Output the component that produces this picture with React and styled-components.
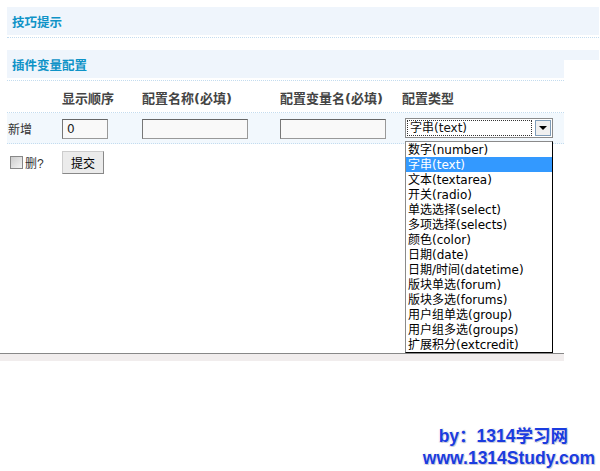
import React from "react";
import styled, { createGlobalStyle } from "styled-components";

const Global = createGlobalStyle`
  html, body { margin: 0; padding: 0; background: #fff; }
  body { font: 12px "Liberation Sans", "Noto Sans CJK SC", sans-serif; color: #333; }
`;

const Page = styled.div`
  position: relative;
  width: 600px;
  height: 471px;
  overflow: hidden;
  padding-top: 7px;
  box-sizing: border-box;
`;

const Section = styled.div`
  margin-left: 7px;
  width: ${p => p.$w}px;
  margin-bottom: ${p => p.$mb || 0}px;
`;

const Header = styled.div`
  position: relative;
  height: 28px;
  background: #eff5fc;
  display: flex;
  align-items: center;
  padding-left: 5px;
  font-weight: bold;
  font-size: 12.5px;
  color: #0e93c7;
  border-bottom: 2px solid #fff;
  &::after {
    content: "";
    display: ${p => (p.$ext ? "block" : "none")};
    position: absolute;
    left: 100%;
    top: 0;
    width: 35px;
    height: 10px;
    background: #eff5fc;
  }
`;

const Dotted = styled.div`
  border-top: 1px dotted #c3dcef;
`;

const Grid = styled.div`
  display: grid;
  grid-template-columns: 55px 80px 138px 122px 1fr;
  align-items: center;
`;

const HeadRow = styled(Grid)`
  height: 30px;
  font: bold 13px "DejaVu Sans", "Noto Sans CJK SC", sans-serif;
  color: #444;
  border-bottom: 1px dotted #c3dcef;
  padding-top: 1px;
`;

const DataRow = styled(Grid)`
  height: 30px;
  background: #f2f8fd;
  border-bottom: 1px dotted #c3dcef;
`;

const Label = styled.span`
  color: #333;
  padding-left: 1px;
`;

const TextInput = styled.input`
  box-sizing: border-box;
  height: 20px;
  width: ${p => p.$w}px;
  border: 1px solid #999;
  border-top-color: #666;
  border-left-color: #777;
  background: #f9f9f9;
  font: 12px "DejaVu Sans", sans-serif;
  color: #222;
  padding: 0 4px;
  margin-top: 1px;
  outline: none;
`;

const SelectWrap = styled.div`
  position: relative;
  margin-left: 3px;
  width: 148px;
`;

const SelectBox = styled.div`
  box-sizing: border-box;
  height: 20px;
  border: 1px solid #8a8a8a;
  background: #fff;
  display: flex;
  align-items: center;
  padding: 1px;
`;

const SelText = styled.div`
  flex: 1;
  height: 16px;
  border: 1px dotted #333;
  box-sizing: border-box;
  font: 12px "DejaVu Sans", "Noto Sans CJK SC", sans-serif;
  color: #111;
  line-height: 14px;
  padding-left: 2px;
  margin-right: 3px;
`;

const ArrowBtn = styled.div`
  width: 16px;
  height: 16px;
  box-sizing: border-box;
  border: 1px solid #7f9db9;
  background: #f0f0f0;
  display: flex;
  align-items: center;
  justify-content: center;
`;

const List = styled.ul`
  position: absolute;
  top: 23px;
  left: 0;
  width: 148px;
  margin: 0;
  padding: 0;
  list-style: none;
  box-sizing: border-box;
  border: 1px solid #000;
  border-left-color: #8a8a8a;
  border-top-color: #8a8a8a;
  background: #fff;
  z-index: 2;
`;

const Item = styled.li`
  height: 15px;
  padding: 1px 0 0 2px;
  box-sizing: border-box;
  font: 12px "DejaVu Sans", "Noto Sans CJK SC", sans-serif;
  line-height: 14px;
  color: ${p => (p.$sel ? "#fff" : "#000")};
  background: ${p => (p.$sel ? "#3399ff" : "transparent")};
  white-space: nowrap;
`;

const ActionRow = styled.div`
  display: flex;
  align-items: center;
  height: 32px;
  padding-top: 4px;
  box-sizing: border-box;
`;

const CheckLabel = styled.label`
  display: flex;
  align-items: center;
  width: 55px;
  color: #333;
  padding-left: 3px;
  box-sizing: border-box;
`;

const Check = styled.span`
  width: 11px;
  height: 11px;
  border: 1px solid #888;
  background: linear-gradient(135deg, #ccc, #f4f4f4);
  margin-right: 2px;
`;

const Button = styled.button`
  height: 23px;
  width: 42px;
  border: 1px solid #888;
  border-top-color: #ccc;
  border-left-color: #ccc;
  background: #ebebeb;
  font: 12px "Liberation Sans", "Noto Sans CJK SC", sans-serif;
  color: #000;
  padding: 0;
`;

const Footer = styled.div`
  position: absolute;
  left: 0;
  top: 353px;
  width: 564px;
  border-top: 1px solid #888;
  height: 7px;
  background: #f1eded;
`;

const Watermark = styled.div`
  position: absolute;
  right: 5px;
  bottom: 2px;
  text-align: right;
  font: bold 17.5px "Liberation Sans", "Noto Sans CJK SC", sans-serif;
  color: #1a3ce0;
  line-height: 22px;
  text-shadow: 1px 1px 0 #ccd, -1px -1px 0 #fff, 1px -1px 0 #eee, -1px 1px 0 #eee;
`;

const WLine = styled.div`
  padding-right: ${p => p.$pr || 0}px;
`;

const options = [
  "数字(number)",
  "字串(text)",
  "文本(textarea)",
  "开关(radio)",
  "单选选择(select)",
  "多项选择(selects)",
  "颜色(color)",
  "日期(date)",
  "日期/时间(datetime)",
  "版块单选(forum)",
  "版块多选(forums)",
  "用户组单选(group)",
  "用户组多选(groups)",
  "扩展积分(extcredit)",
];

export default function App() {
  return (
    <>
      <Global />
      <Page>
        <Section $w={592} $mb={12}>
          <Header>技巧提示</Header>
          <Dotted />
        </Section>
        <Section $w={557}>
          <Header $ext>插件变量配置</Header>
          <Dotted />
          <HeadRow>
            <span />
            <span>显示顺序</span>
            <span>配置名称(必填)</span>
            <span>配置变量名(必填)</span>
            <span>配置类型</span>
          </HeadRow>
          <DataRow>
            <Label>新增</Label>
            <TextInput $w={46} defaultValue="0" />
            <TextInput $w={106} />
            <TextInput $w={106} />
            <SelectWrap>
              <SelectBox>
                <SelText>字串(text)</SelText>
                <ArrowBtn>
                  <svg width="8" height="5" viewBox="0 0 8 5">
                    <path d="M0 0h8L4 4z" fill="#000" />
                  </svg>
                </ArrowBtn>
              </SelectBox>
              <List>
                {options.map((o, i) => (
                  <Item key={o} $sel={i === 1}>{o}</Item>
                ))}
              </List>
            </SelectWrap>
          </DataRow>
          <ActionRow>
            <CheckLabel>
              <Check />
              删?
            </CheckLabel>
            <Button>提交</Button>
          </ActionRow>
        </Section>
        <Footer />
        <Watermark>
          <WLine $pr={27}>by：1314学习网</WLine>
          <WLine>www.1314Study.com</WLine>
        </Watermark>
      </Page>
    </>
  );
}
